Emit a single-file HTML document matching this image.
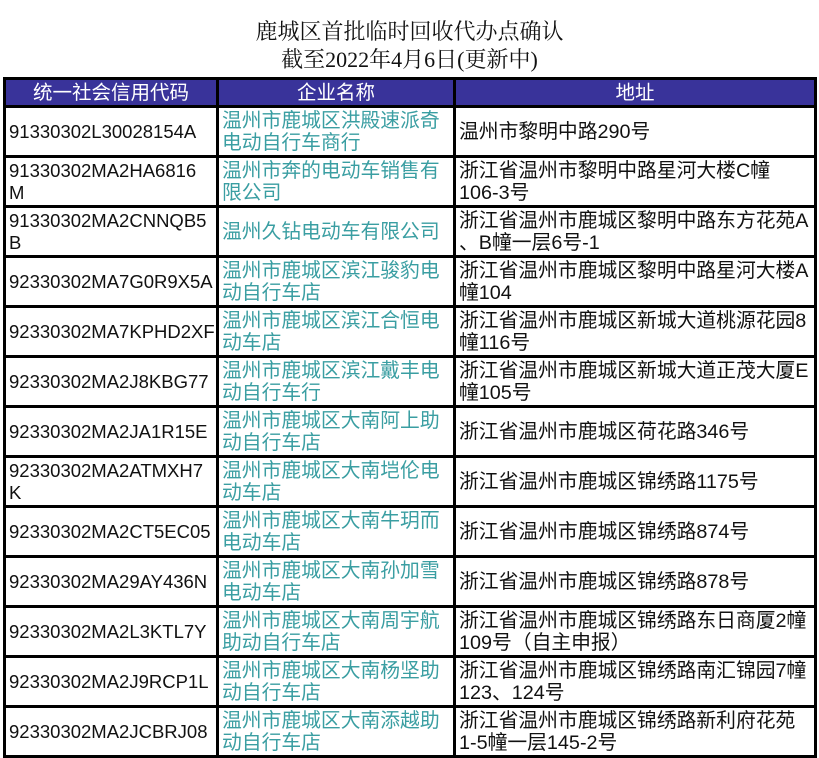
<!DOCTYPE html>
<html><head><meta charset="utf-8"><style>
body{margin:0;background:#fff;width:819px;height:757px;overflow:hidden;position:relative}
.t{position:absolute;left:0;width:819px;text-align:center;font-family:"Liberation Serif","Noto Serif CJK SC",serif;font-size:22px;color:#111}
table{position:absolute;left:3px;top:77px;width:811px;border-collapse:collapse;table-layout:fixed;font-family:"Liberation Sans","Noto Sans CJK SC",sans-serif;font-size:18.5px}
td{border:3px solid #000;height:47px;padding:0 0 0 3px;line-height:22px;vertical-align:middle;overflow:hidden;white-space:nowrap;color:#111}
td.n,td.a{font-size:19.8px}
tr.h td{background:#39339a;color:#fff;text-align:center;height:25px;line-height:24px;padding:0;font-size:19.5px}
td.n{color:#3a9ea2}
</style></head><body>
<div class="t" style="top:15px">鹿城区首批临时回收代办点确认</div>
<div class="t" style="top:43px">截至2022年4月6日(更新中)</div>
<table>
<colgroup><col style="width:213px"><col style="width:237px"><col style="width:361px"></colgroup>
<tr class="h"><td>统一社会信用代码</td><td>企业名称</td><td>地址</td></tr>
<tr><td>91330302L30028154A</td><td class="n">温州市鹿城区洪殿速派奇<br>电动自行车商行</td><td class="a">温州市黎明中路290号</td></tr>
<tr><td>91330302MA2HA6816<br>M</td><td class="n">温州市奔的电动车销售有<br>限公司</td><td class="a">浙江省温州市黎明中路星河大楼C幢<br>106-3号</td></tr>
<tr><td>91330302MA2CNNQB5<br>B</td><td class="n">温州久钻电动车有限公司</td><td class="a">浙江省温州市鹿城区黎明中路东方花苑A<br>、B幢一层6号-1</td></tr>
<tr><td>92330302MA7G0R9X5A</td><td class="n">温州市鹿城区滨江骏豹电<br>动自行车店</td><td class="a">浙江省温州市鹿城区黎明中路星河大楼A<br>幢104</td></tr>
<tr><td>92330302MA7KPHD2XF</td><td class="n">温州市鹿城区滨江合恒电<br>动车店</td><td class="a">浙江省温州市鹿城区新城大道桃源花园8<br>幢116号</td></tr>
<tr><td>92330302MA2J8KBG77</td><td class="n">温州市鹿城区滨江戴丰电<br>动自行车行</td><td class="a">浙江省温州市鹿城区新城大道正茂大厦E<br>幢105号</td></tr>
<tr><td>92330302MA2JA1R15E</td><td class="n">温州市鹿城区大南阿上助<br>动自行车店</td><td class="a">浙江省温州市鹿城区荷花路346号</td></tr>
<tr><td>92330302MA2ATMXH7<br>K</td><td class="n">温州市鹿城区大南垲伦电<br>动车店</td><td class="a">浙江省温州市鹿城区锦绣路1175号</td></tr>
<tr><td>92330302MA2CT5EC05</td><td class="n">温州市鹿城区大南牛玥而<br>电动车店</td><td class="a">浙江省温州市鹿城区锦绣路874号</td></tr>
<tr><td>92330302MA29AY436N</td><td class="n">温州市鹿城区大南孙加雪<br>电动车店</td><td class="a">浙江省温州市鹿城区锦绣路878号</td></tr>
<tr><td>92330302MA2L3KTL7Y</td><td class="n">温州市鹿城区大南周宇航<br>助动自行车店</td><td class="a">浙江省温州市鹿城区锦绣路东日商厦2幢<br>109号（自主申报）</td></tr>
<tr><td>92330302MA2J9RCP1L</td><td class="n">温州市鹿城区大南杨坚助<br>动自行车店</td><td class="a">浙江省温州市鹿城区锦绣路南汇锦园7幢<br>123、124号</td></tr>
<tr><td>92330302MA2JCBRJ08</td><td class="n">温州市鹿城区大南添越助<br>动自行车店</td><td class="a">浙江省温州市鹿城区锦绣路新利府花苑<br>1-5幢一层145-2号</td></tr>
</table>
</body></html>
